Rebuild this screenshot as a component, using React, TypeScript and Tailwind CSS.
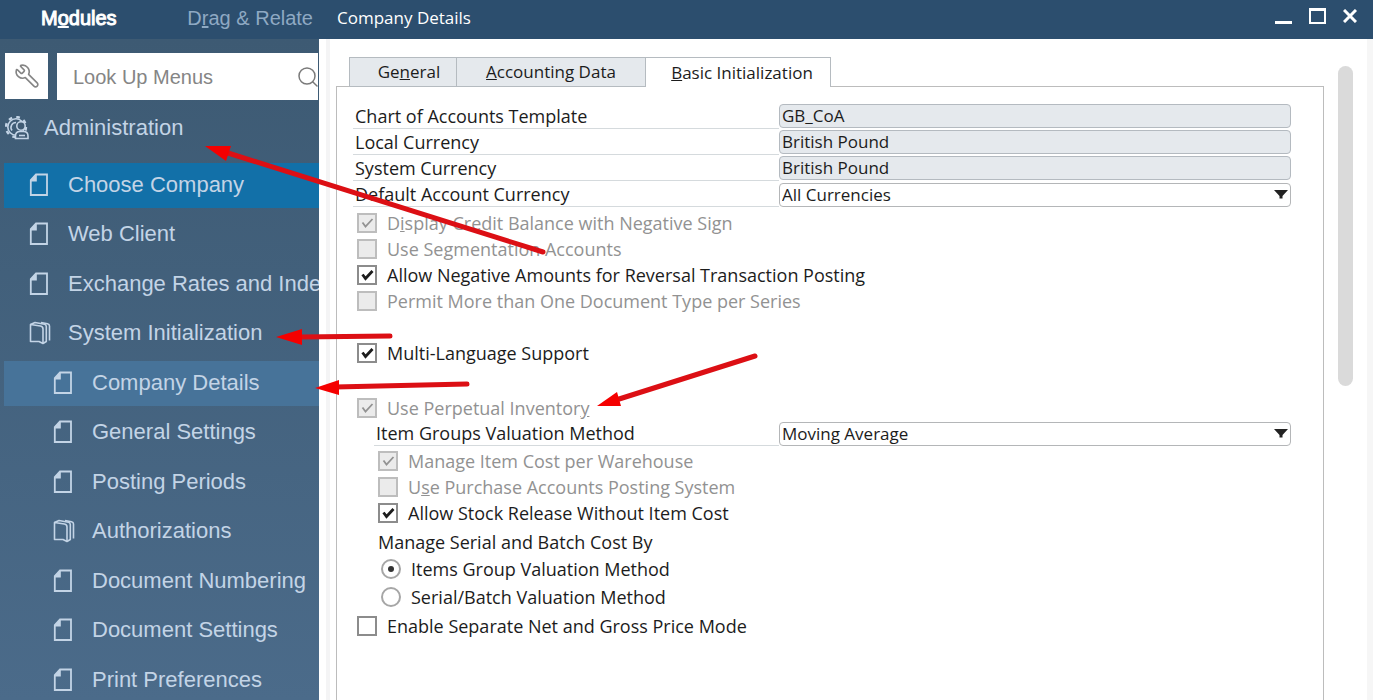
import { useState } from 'react'
import type { ReactNode } from 'react'
import { Search, Wrench } from 'lucide-react'

type MenuItem = { label: string; icon: 'doc' | 'folder'; sub?: boolean; state?: 'active' | 'open' }

const menu: MenuItem[] = [
  { label: 'Choose Company', icon: 'doc', state: 'active' },
  { label: 'Web Client', icon: 'doc' },
  { label: 'Exchange Rates and Inde', icon: 'doc' },
  { label: 'System Initialization', icon: 'folder' },
  { label: 'Company Details', icon: 'doc', sub: true, state: 'open' },
  { label: 'General Settings', icon: 'doc', sub: true },
  { label: 'Posting Periods', icon: 'doc', sub: true },
  { label: 'Authorizations', icon: 'folder', sub: true },
  { label: 'Document Numbering', icon: 'doc', sub: true },
  { label: 'Document Settings', icon: 'doc', sub: true },
  { label: 'Print Preferences', icon: 'doc', sub: true },
]

function DocIcon() {
  return (
    <svg width="22" height="24" viewBox="0 0 22 24" fill="none" stroke="currentColor" strokeWidth="1.8" className="shrink-0">
      <path d="M7 1.500H18V22H1.800V7Z" />
      <path d="M7.800 1V8.500H1Z" fill="currentColor" stroke="none" />
    </svg>
  )
}

function FolderIcon() {
  return (
    <svg width="22" height="24" viewBox="0 0 22 24" fill="none" stroke="currentColor" strokeWidth="1.6" strokeLinejoin="round" className="shrink-0">
      <path d="M1.500 3.500L11.500 5Q14 5.500 14 8V22.500L10 20.500H1.500Z" />
      <path d="M1.500 3.500L6 1.500L15.500 3.200Q17.300 3.700 17.300 5.500V20.500L14 22.500" />
      <path d="M12 1.500L18.500 2.800Q20.500 3.300 20.500 5V19.500" />
    </svg>
  )
}

function AdminIcon() {
  return (
    <svg width="24" height="24" viewBox="0 0 24 24" fill="none" stroke="currentColor" strokeWidth="1.6" className="shrink-0">
      <circle cx="11" cy="11" r="8.200" />
      <circle cx="11" cy="11" r="10" strokeWidth="2.400" strokeDasharray="3.600 4.250" />
      <path d="M11 6.500A5 5 0 0 0 7 14.500" />
      <circle cx="16" cy="10" r="4.200" fill="#3f5b74" />
      <path d="M10.500 22.500V20Q10.500 15.500 15 15.500H18.500Q23 15.500 23 20V22.500Z" fill="#3f5b74" />
      <path d="M14 19.500H20" />
    </svg>
  )
}

function Check({ label, checked = false, disabled = false }: { label: ReactNode; checked?: boolean; disabled?: boolean }) {
  const [on, setOn] = useState(checked)
  return (
    <label className={`flex h-[26px] items-center gap-2.5 ${disabled ? 'text-[#929292]' : ''}`}>
      <span className="relative flex size-5">
        <input
          type="checkbox"
          checked={on}
          disabled={disabled}
          onChange={(e) => setOn(e.target.checked)}
          className="size-5 appearance-none border-2 border-[#8c8c8c] bg-white disabled:border-[#bdbdbd] disabled:bg-[#ebebeb]"
        />
        {on && (
          <svg viewBox="0 0 20 20" fill="none" stroke="currentColor" strokeWidth={disabled ? 1.8 : 2.8} className="pointer-events-none absolute inset-0 size-5">
            <path d="M5.500 9.500L8.500 13.500L15.500 6" />
          </svg>
        )}
      </span>
      <span>{label}</span>
    </label>
  )
}

function Radio({ label, checked, onChange }: { label: string; checked: boolean; onChange: () => void }) {
  return (
    <label className="flex h-7 items-center gap-2.5 pl-7">
      <span className="relative flex size-5">
        <input type="radio" name="serialCost" checked={checked} onChange={onChange} className="size-5 appearance-none rounded-full border-2 border-[#a6a6a6] bg-white" />
        {checked && <span className="pointer-events-none absolute inset-[7px] rounded-full bg-[#333]" />}
      </span>
      <span>{label}</span>
    </label>
  )
}

function Field({ id, label, value, options }: { id: string; label: string; value: string; options?: string[] }) {
  return (
    <div className="flex h-[26px]">
      <label htmlFor={id} className="h-[25px] flex-[0_0_426px] border-b border-[#d5dadd] pl-0.5 group-data-indent:flex-[0_0_405px]">
        {label}
      </label>
      {options ? (
        <div className="relative h-6 min-w-0 flex-1">
          <select id={id} defaultValue={value} className="h-6 w-full appearance-none rounded-sm border border-[#b4b6b8] bg-white pl-0.5 text-[17px] leading-[22px]">
            {options.map((o) => (
              <option key={o}>{o}</option>
            ))}
          </select>
          <svg width="14" height="9" viewBox="0 0 14 9" className="pointer-events-none absolute top-2 right-[3px]">
            <path d="M0 0H14L8.500 6V8.500H5.500V6Z" fill="#222" />
          </svg>
        </div>
      ) : (
        <input id={id} readOnly value={value} className="h-6 min-w-0 flex-1 rounded-sm border border-[#b4bac0] bg-[#e5e9ed] pl-0.5 text-[17px]" />
      )}
    </div>
  )
}

function Arrows() {
  return (
    <svg width="800" height="450" viewBox="0 0 800 450" className="pointer-events-none absolute top-0 left-0">
      <g stroke="#dc0f14" strokeWidth="5" strokeLinecap="round">
        <path d="M543 252L228 153" />
        <path d="M390 336L300 337" />
        <path d="M467 384L335 387" />
        <path d="M755 356L616 400" />
      </g>
      <g fill="#f50000">
        <path d="M205 146L231 146L226 161Z" />
        <path d="M276 337L302 329V345Z" />
        <path d="M315 388L339 380V395Z" />
        <path d="M597 406L617 392L621 406Z" />
      </g>
    </svg>
  )
}

export default function App() {
  const [method, setMethod] = useState('items')

  return (
    <div className="relative flex h-screen flex-col overflow-hidden bg-white font-['Open_Sans',sans-serif] text-[18px] leading-6 text-[#1c1c1c]">
      {/* Title bar */}
      <header className="flex h-[39px] shrink-0 items-center bg-[#2c4e6e] pb-1 text-white">
        <nav className="flex w-[319px] shrink-0 justify-between pr-1.5 pl-[41px] font-['Liberation_Sans',sans-serif] text-xl">
          <button className="[-webkit-text-stroke:1px]">M<u>o</u>dules</button>
          <button className="text-[#8fa9c3]">D<u>r</u>ag &amp; Relate</button>
        </nav>
        <h1 className="flex-1 pl-[18px] text-[17px]">Company Details</h1>
        <div className="flex items-center gap-[17px] pr-4">
          <button aria-label="Minimize" className="mb-1 flex h-4 w-[17px] items-end">
            <span className="h-[3px] w-full bg-white" />
          </button>
          <button aria-label="Maximize" className="mb-1 h-4 w-[17px] border-2 border-t-3 border-white" />
          <button aria-label="Close" className="mb-1">
            <svg width="14" height="14" viewBox="0 0 14 14" stroke="white" strokeWidth="3">
              <path d="M1 1L13 13M13 1L1 13" />
            </svg>
          </button>
        </div>
      </header>

      <div className="flex min-h-0 flex-1">
        {/* Module menu */}
        <aside className="w-[319px] shrink-0 overflow-hidden bg-linear-to-b from-[#3d5a73] to-[#4b6b8a] font-['Liberation_Sans',sans-serif] text-[22px] text-[#c3d4e6]">
          <div className="flex h-[77px] gap-[9px] pt-3.5 pr-px pl-[5px]">
            <button aria-label="Settings" className="flex h-[46px] w-[43px] items-center justify-center bg-white text-[#858585]">
              <Wrench className="size-[26px] -scale-x-100" strokeWidth={1.5} />
            </button>
            <label className="flex h-[47px] flex-1 items-center overflow-hidden bg-white text-[#7a7a7a]">
              <input aria-label="Look Up Menus" placeholder="Look Up Menus" className="w-full min-w-0 flex-1 pl-4 text-xl placeholder:text-[#858585]" />
              <Search className="mr-[-2px] size-6 shrink-0" strokeWidth={1.5} />
            </label>
          </div>
          <a href="#administration" className="flex h-[47px] items-start gap-[15px] pl-[5px]">
            <AdminIcon />
            Administration
          </a>
          <ul className="whitespace-nowrap">
            {menu.map((m) => (
              <li key={m.label} className="h-[49px] pl-1 even:h-[50px]">
                <a
                  href="#menu"
                  className={`flex h-[45px] items-center gap-[17px] pb-0.5 ${m.sub ? 'pl-[49px]' : 'pl-[25px]'} ${
                    m.state === 'active' ? 'bg-[#1270a8]' : m.state === 'open' ? 'bg-[#477399]' : ''
                  }`}
                >
                  {m.icon === 'doc' ? <DocIcon /> : <FolderIcon />}
                  {m.label}
                </a>
              </li>
            ))}
          </ul>
        </aside>

        {/* Company details form */}
        <main className="flex min-w-0 flex-1">
          <div className="ml-[7px] w-1 shrink-0 bg-[#f4f4f5]" />
          <div className="flex min-w-0 flex-1 flex-col pt-[18px] pl-1.5">
            <div role="tablist" className="relative z-10 -mb-px flex h-[30px] pl-[13px] text-[17px]">
              <button role="tab" className="w-[108px] border border-[#b5bbc0] bg-[#e5e9ed] pl-3">Ge<u>n</u>eral</button>
              <button role="tab" className="w-[189px] border border-l-0 border-[#b5bbc0] bg-[#e5e9ed]"><u>A</u>ccounting Data</button>
              <button role="tab" aria-selected className="w-[185px] border border-b-0 border-l-0 border-[#b5bbc0] bg-white pl-2"><u>B</u>asic Initialization</button>
            </div>
            <div className="flex-1 border border-b-0 border-[#bcbcbc] pt-[17px] pr-8 pl-4">
              <Field id="coa" label="Chart of Accounts Template" value="GB_CoA" />
              <Field id="local" label="Local Currency" value="British Pound" />
              <Field id="system" label="System Currency" value="British Pound" />
              <Field id="account" label="Default Account Currency" value="All Currencies" options={['All Currencies', 'British Pound']} />

              <div className="pt-0.5 pl-1">
                <Check label={<>D<u>i</u>splay Credit Balance with Negative Sign</>} checked disabled />
                <Check label="Use Segmentation Accounts" disabled />
                <Check label="Allow Negative Amounts for Reversal Transaction Posting" checked />
                <Check label="Permit More than One Document Type per Series" disabled />
              </div>
              <div className="py-[26px] pl-1">
                <Check label="Multi-Language Support" checked />
              </div>
              <div className="pt-[3px] pl-1">
                <Check label={<>Use Perpetual Inventor<u>y</u></>} checked disabled />
              </div>
              <div data-indent className="group pl-[21px]">
                <Field id="valuation" label="Item Groups Valuation Method" value="Moving Average" options={['Moving Average', 'Standard', 'FIFO']} />
                <div className="pt-px pl-1">
                  <Check label="Manage Item Cost per Warehouse" checked disabled />
                  <Check label={<>U<u>s</u>e Purchase Accounts Posting System</>} disabled />
                  <Check label="Allow Stock Release Without Item Cost" checked />
                </div>
              </div>
              <fieldset>
                <legend className="h-[29px] pt-1 pl-[25px]">Manage Serial and Batch Cost By</legend>
                <Radio label="Items Group Valuation Method" checked={method === 'items'} onChange={() => setMethod('items')} />
                <Radio label="Serial/Batch Valuation Method" checked={method === 'serial'} onChange={() => setMethod('serial')} />
              </fieldset>
              <div className="pt-0.5 pl-1">
                <Check label="Enable Separate Net and Gross Price Mode" />
              </div>
            </div>
          </div>
          <div className="flex w-[49px] shrink-0 justify-center border-r-6 border-[#f6f6f6] pt-[27px]">
            <div className="h-[320px] w-[15px] rounded-full bg-[#dadada]" />
          </div>
        </main>
      </div>

      <Arrows />
    </div>
  )
}
